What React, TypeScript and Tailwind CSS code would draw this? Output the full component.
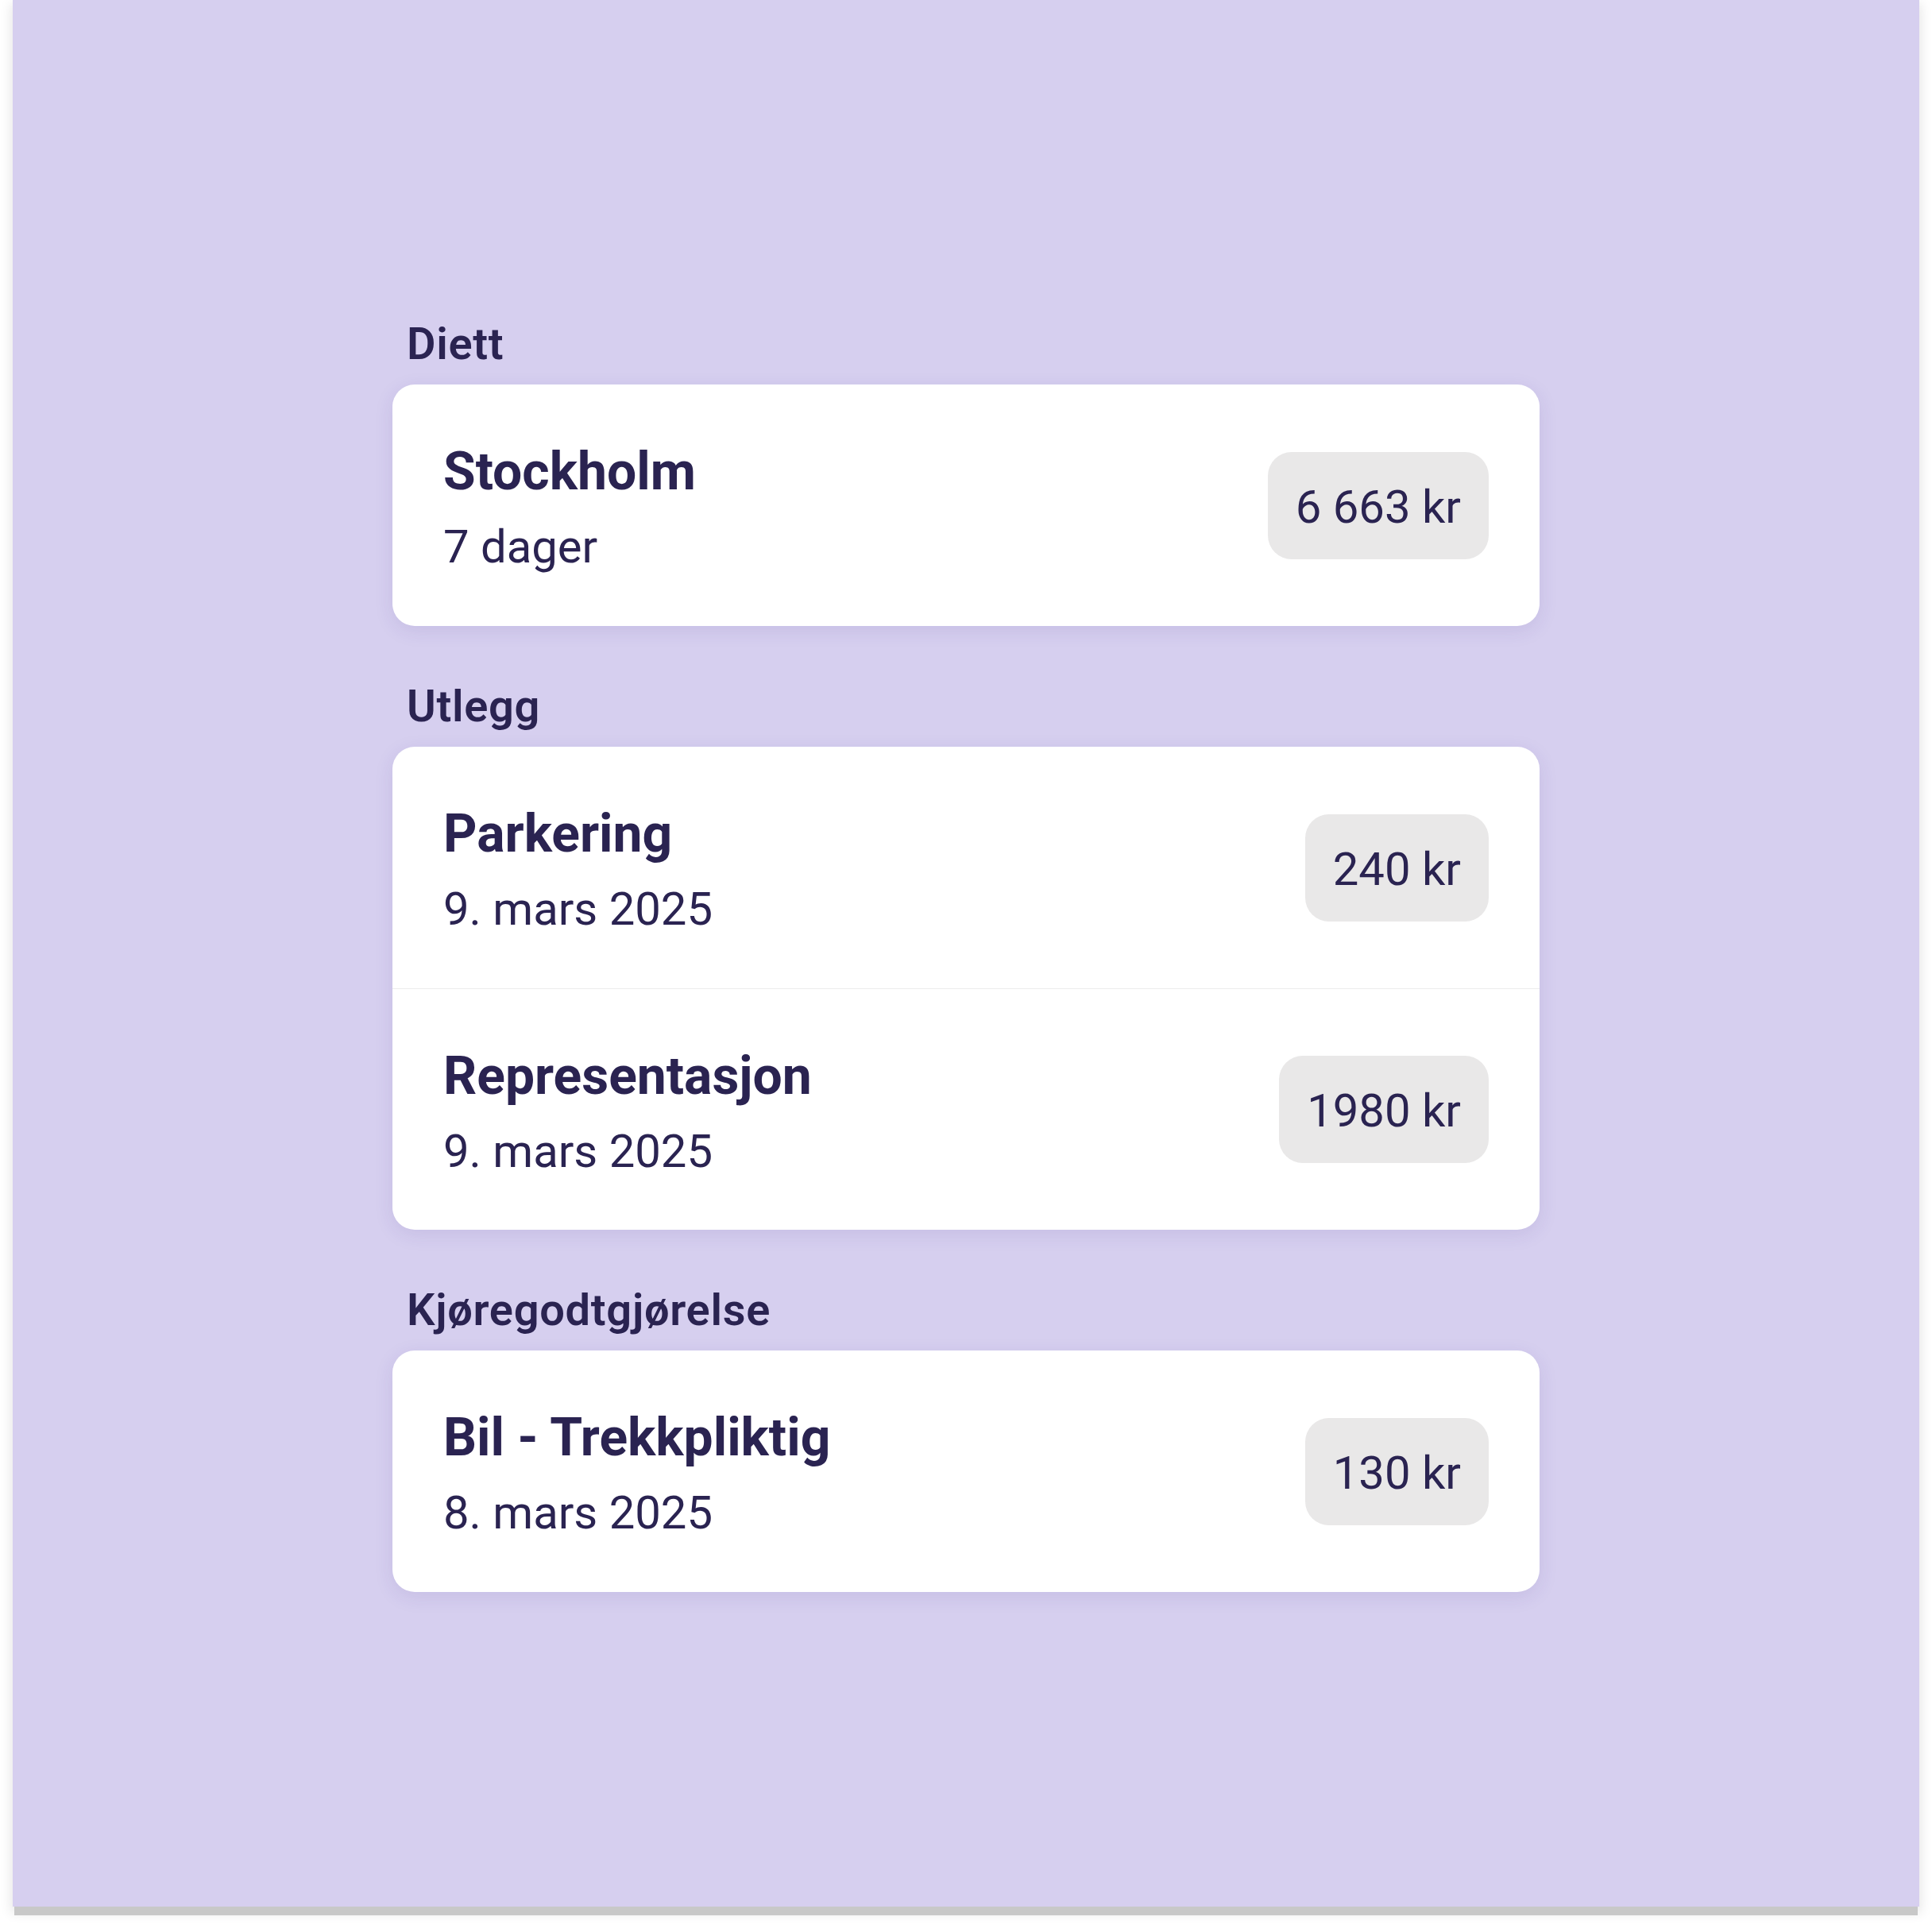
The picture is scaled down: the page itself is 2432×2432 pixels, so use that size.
import React from "react";

type Item = { title: string; sub: string; amount: string };

const sections: { label: string; items: Item[] }[] = [
  { label: "Diett", items: [{ title: "Stockholm", sub: "7 dager", amount: "6 663 kr" }] },
  {
    label: "Utlegg",
    items: [
      { title: "Parkering", sub: "9. mars 2025", amount: "240 kr" },
      { title: "Representasjon", sub: "9. mars 2025", amount: "1980 kr" },
    ],
  },
  {
    label: "Kjøregodtgjørelse",
    items: [{ title: "Bil - Trekkpliktig", sub: "8. mars 2025", amount: "130 kr" }],
  },
];

function Row({ item, first }: { item: Item; first: boolean }) {
  return (
    <div
      className={
        "flex items-center justify-between h-[304px] pl-[64px] pr-[64px] " +
        (first ? "" : "border-t border-[#ececec]")
      }
    >
      <div className="flex flex-col pt-[6px]">
        <div className="text-[66px] font-bold leading-[98px] text-[#2a2351]">{item.title}</div>
        <div className="text-[58px] font-normal leading-[90px] text-[#2a2351]">{item.sub}</div>
      </div>
      <div className="flex items-center h-[135px] px-[35px] pt-[3px] rounded-[30px] bg-[#e9e8e8]">
        <span className="text-[58px] leading-none text-[#2a2351]">{item.amount}</span>
      </div>
    </div>
  );
}

export default function App() {
  return (
    <div
      className="w-[2432px] h-[2432px] bg-white"
      style={{ fontFamily: 'Roboto, "Noto Sans", "Liberation Sans", sans-serif' }}
    >
      <div className="ml-[16px] w-[2400px] h-[2400px] bg-[#d6cfef] shadow-[0_13px_0_-2px_#c8c8c8,0_6px_14px_2px_rgba(0,0,0,0.10)] flex justify-center pt-[394px]">
        <div className="w-[1444px] flex flex-col">
          {sections.map((s, i) => (
            <div key={s.label} className={i === 0 ? "" : "mt-[62px]"}>
              <div className="pl-[18px] pt-[3px] text-[56px] font-semibold leading-[72px] tracking-[0.7px] text-[#2a2351]">
                {s.label}
              </div>
              <div className="mt-[15px] bg-white rounded-[28px] shadow-[0_6px_24px_rgba(60,40,140,0.10)] overflow-hidden">
                {s.items.map((it, j) => (
                  <Row key={it.title} item={it} first={j === 0} />
                ))}
              </div>
            </div>
          ))}
        </div>
      </div>
    </div>
  );
}
